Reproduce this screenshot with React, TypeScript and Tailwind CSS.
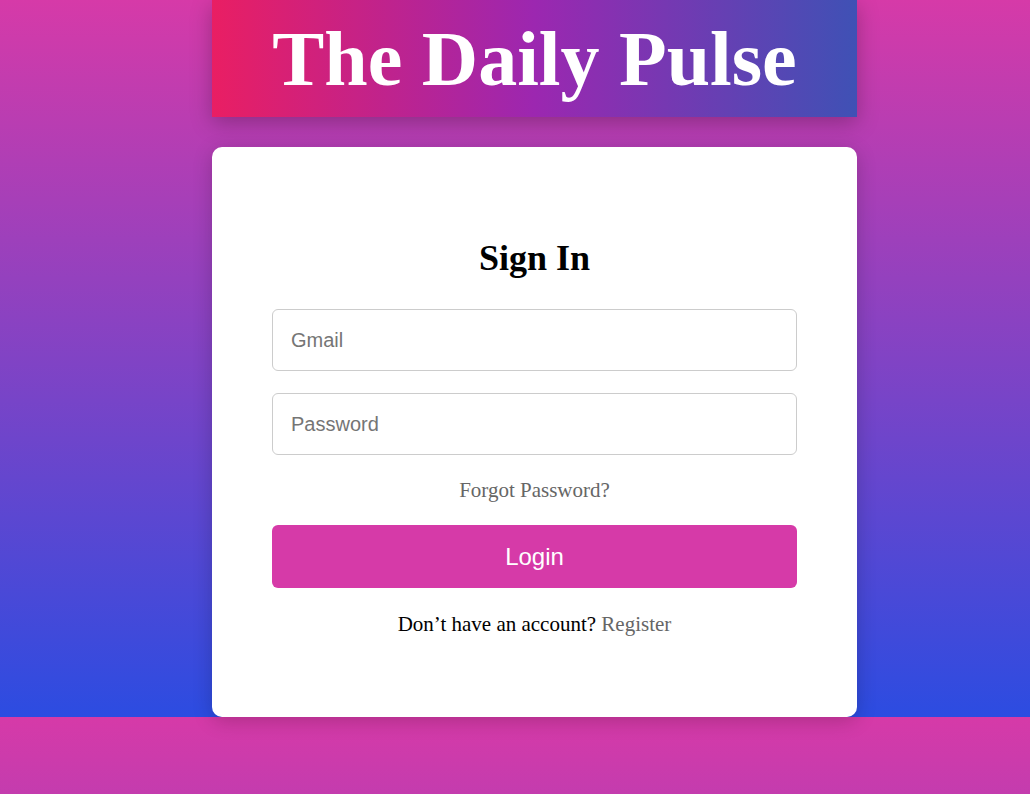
export default function App() {
  return (
    <div className="min-h-screen w-full bg-[linear-gradient(to_bottom,#d63aa8,#2c4ce1)] bg-[length:100%_717px] bg-repeat-y">
      <div className="ml-[212px] flex w-[645px] flex-col">
        <header className="flex h-[117px] items-center justify-center bg-[linear-gradient(to_right,#e91e63,#9c27b0,#3f51b5)] shadow-[0_6px_20px_rgba(0,0,0,0.25)]">
          <h1 className="font-['Liberation_Serif',serif] text-[78px] leading-none font-bold text-white">
            The Daily Pulse
          </h1>
        </header>

        <div className="mt-[30px] rounded-[10px] bg-white p-[60px] shadow-[0_4px_20px_rgba(0,0,0,0.2)]">
          <h2 className="mt-[31px] mb-[30px] text-center font-['Liberation_Serif',serif] text-[36px] leading-[41px] font-bold text-black">
            Sign In
          </h2>

          <form className="flex flex-col" onSubmit={(e) => e.preventDefault()}>
            <input
              type="email"
              placeholder="Gmail"
              className="h-[62px] w-full rounded-[6px] border border-[#ccc] px-[18px] font-['Liberation_Sans',Arial,sans-serif] text-[20px] text-black outline-none placeholder:text-[#757575]"
            />
            <input
              type="password"
              placeholder="Password"
              className="mt-[22px] h-[62px] w-full rounded-[6px] border border-[#ccc] px-[18px] font-['Liberation_Sans',Arial,sans-serif] text-[20px] text-black outline-none placeholder:text-[#757575]"
            />

            <a
              href="#"
              className="mt-[23px] block text-center font-['Liberation_Serif',serif] text-[21px] leading-[24px] text-[#666]"
            >
              Forgot Password?
            </a>

            <button
              type="submit"
              className="mt-[23px] h-[63px] w-full rounded-[6px] bg-[#d63aa8] font-['Liberation_Sans',Arial,sans-serif] text-[24px] text-white"
            >
              Login
            </button>

            <p className="mt-[24px] text-center font-['Liberation_Serif',serif] text-[21px] leading-[24px] text-black">
              Don’t have an account?{" "}
              <a href="#" className="text-[#666]">
                Register
              </a>
            </p>
          </form>
          <div className="h-[21px]" />
        </div>
      </div>
    </div>
  );
}
